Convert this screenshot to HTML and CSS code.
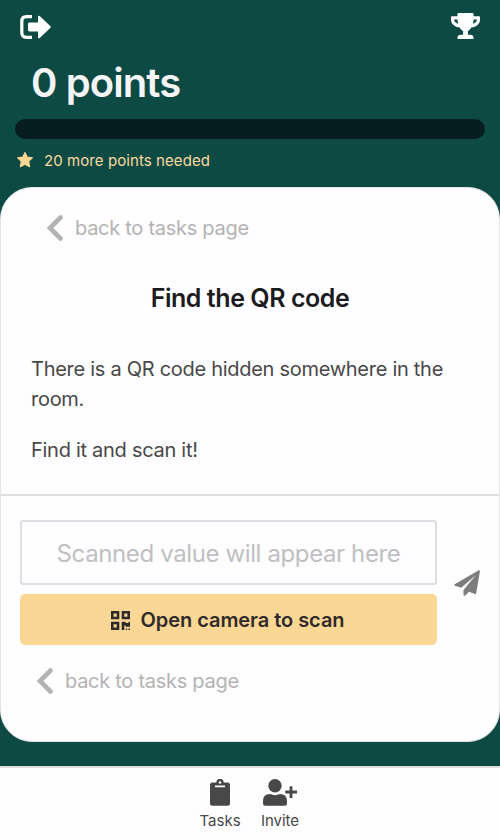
FILE: index.html
```
<!DOCTYPE html>
<html lang="en">
<head>
  <meta charset="UTF-8" />
  <meta name="viewport" content="width=device-width, initial-scale=1">
  <title>Find the QR code</title>
  <link rel="stylesheet" href="styles.css">
</head>
<body>
  <header class="header">
    <div class="top-bar">
      <svg class="logout" width="32" height="24" viewBox="0 0 32 24">
        <path d="M12 1.700H6.500Q1.800 1.700 1.800 6.500V17.500Q1.800 22.300 6.500 22.300H12" fill="none" stroke="#fff" stroke-width="3.200"/>
        <path d="M9.300 7.600H18V1.800Q18 .2 19.700 1L30.500 11.200Q31.200 12 30.500 12.800L19.700 23Q18 23.800 18 22.200V16.400H9.300Q8 16.400 8 15.100V8.900Q8 7.600 9.300 7.600Z" fill="#fff"/>
      </svg>
      <svg class="trophy" width="29" height="26" viewBox="0 0 576 512">
        <path fill="#fff" d="M552 64H448V24c0-13.300-10.700-24-24-24H152c-13.300 0-24 10.700-24 24v40H24C10.700 64 0 74.700 0 88v56c0 35.700 22.500 72.400 61.900 100.700 31.500 22.700 69.800 37.100 110 41.700C203.300 338.500 240 360 240 360v72h-48c-35.300 0-64 20.700-64 56v12c0 6.600 5.400 12 12 12h296c6.600 0 12-5.400 12-12v-12c0-35.300-28.700-56-64-56h-48v-72s36.700-21.500 68.100-73.600c40.300-4.600 78.600-19 110-41.700 39.300-28.300 61.900-65 61.900-100.700V88c0-13.300-10.700-24-24-24zM99.300 192.800C74.900 175.200 64 155.600 64 144v-16h64.200c1 32.600 5.800 61.200 12.800 86.200-15.100-5.200-29.200-12.400-41.700-21.400zM512 144c0 16.100-17.700 36.100-35.300 48.800-12.500 9-26.700 16.200-41.800 21.400 7-25 11.800-53.600 12.800-86.200H512v16z"/>
      </svg>
    </div>
    <h1 class="points">0 points</h1>
    <div class="progress"></div>
    <div class="needed">
      <svg width="18" height="18" viewBox="0 0 18 18">
        <path fill="#fbd995" stroke="#fbd995" stroke-width="1" stroke-linejoin="round" d="M9 1.300L11.300 6.100L16.600 6.800L12.800 10.500L13.700 15.900L9 13.400L4.300 15.900L5.200 10.500L1.400 6.800L6.700 6.100Z"/>
      </svg>
      <span>20 more points needed</span>
    </div>
  </header>

  <main class="card">
    <a class="back">
      <svg width="18" height="28" viewBox="0 0 18 28"><path d="M14.500 3.500L4 14L14.500 24.500" fill="none" stroke="#b3b3b3" stroke-width="4.600" stroke-linecap="round"/></svg>
      <span>back to tasks page</span>
    </a>
    <h2 class="title">Find the QR code</h2>
    <div class="text">
      <p>There is a QR code hidden somewhere in the room.</p>
      <p>Find it and scan it!</p>
    </div>
    <div class="answer">
      <div class="fields">
        <input class="scanned" type="text" placeholder="Scanned value will appear here" readonly>
        <button class="scan" type="button">
          <svg width="19" height="19" viewBox="0 0 19 19" fill="#302b2a">
            <path fill-rule="evenodd" d="M0 0H8.300V8.300H0ZM2.600 2.600V5.700H5.700V2.600ZM10.700 0H19V8.300H10.700ZM13.300 2.600V5.700H16.400V2.600ZM0 10.700H8.300V19H0ZM2.600 13.300V16.400H5.700V13.300Z"/>
            <path d="M10.700 10.700H14.700V12H17.500V10.700H19V15.800H14.700V14.400H13.300V19H10.700ZM14.800 17.500H16.200V19H14.800ZM17.500 17.500H19V19H17.500Z"/>
          </svg>
          <span>Open camera to scan</span>
        </button>
      </div>
      <svg class="send" width="26" height="26" viewBox="0 0 26 26">
        <path fill="#7d7d7d" d="M.7 14.300L24.300.4Q26 0 25.900 1.500L22.200 23.200Q21.900 24.500 20.600 24L15.100 21.800L11.300 25.500Q9.700 26.300 9.500 24.700V19.900L21.700 5.300L7.200 17.700L1 15.700Q-.2 15 .7 14.300Z"/>
      </svg>
    </div>
    <a class="back back-bottom">
      <svg width="18" height="28" viewBox="0 0 18 28"><path d="M14.500 3.500L4 14L14.500 24.500" fill="none" stroke="#b3b3b3" stroke-width="4.600" stroke-linecap="round"/></svg>
      <span>back to tasks page</span>
    </a>
  </main>

  <nav class="nav">
    <a class="nav-item">
      <svg width="20" height="27" viewBox="0 0 20 27">
        <path fill="#484848" fill-rule="evenodd" d="M2.500 3.500H6.300A3.700 3.700 0 0 1 13.700 3.500H17.500Q20 3.500 20 6V24.200Q20 26.700 17.500 26.700H2.500Q0 26.700 0 24.200V6Q0 3.500 2.500 3.500ZM10 2.200A1.300 1.300 0 1 0 10 4.800A1.300 1.300 0 1 0 10 2.200ZM5 6.600V8.300H15V6.600Z"/>
      </svg>
      <span>Tasks</span>
    </a>
    <a class="nav-item">
      <svg width="34" height="27" viewBox="0 0 34 27" fill="#484848">
        <circle cx="12" cy="6.700" r="6.700"/>
        <path d="M7 15Q12 17.300 17 15Q24 15 24 22V24.200Q24 26.700 21.500 26.700H2.500Q0 26.700 0 24.200V22Q0 15 7 15Z"/>
        <path d="M26.600 7.300H29.400V11.600H34V14.400H29.400V19H26.600V14.400H22.300V11.600H26.600Z"/>
      </svg>
      <span>Invite</span>
    </a>
  </nav>
</body>
</html>
```
FILE: styles.css
```
* {
  box-sizing: border-box;
}
body {
  margin: 0;
  height: 839px;
  display: flex;
  flex-direction: column;
  overflow: hidden;
  background: #0d4a44;
  font-family: Inter, sans-serif;
  color: #484848;
}
svg {
  display: block;
  flex: none;
}
h1, h2, p {
  margin: 0;
}
.header {
  height: 187px;
  padding: 13px 15px 0;
}
.top-bar {
  display: flex;
  justify-content: space-between;
  padding: 0 5px;
  height: 43px;
}
.logout {
  margin-top: 2px;
}
.points {
  padding-left: 16px;
  font-size: 40px;
  line-height: 54px;
  font-weight: 600;
  letter-spacing: -0.9px;
  color: #f5f5f8;
}
.progress {
  height: 20px;
  margin-top: 9px;
  border-radius: 10px;
  background: #061e20;
}
.needed {
  display: flex;
  align-items: center;
  gap: 10px;
  height: 20px;
  margin-top: 11px;
  font-size: 15px;
  padding-left: 1px;
  letter-spacing: 0.08px;
  color: #fbd9a0;
}
.card {
  height: 555px;
  flex: none;
  border: 1px solid #e4e4e7;
  border-radius: 32px;
  background: #fefdff;
}
.back {
  display: flex;
  align-items: center;
  gap: 11px;
  height: 28px;
  margin: 26px 0 0 45px;
  font-size: 20px;
  letter-spacing: -0.28px;
  color: #b3b3b3;
}
.title {
  margin-top: 40px;
  font-size: 25px;
  line-height: 32px;
  font-weight: 600;
  letter-spacing: -0.45px;
  text-align: center;
  color: #1c1b1e;
}
.text {
  height: 182px;
  padding: 40px 30px 0;
  font-size: 20px;
  line-height: 30px;
  letter-spacing: -0.28px;
  border-bottom: 2px solid #dfe1e1;
}
.text p + p {
  margin-top: 21px;
}
.answer {
  display: flex;
  align-items: center;
  gap: 17px;
  padding: 24px 19px 0;
}
.fields {
  width: 417px;
}
.scanned {
  display: block;
  width: 100%;
  height: 65px;
  padding: 2px 10px 0;
  border: 2px solid #dedee0;
  border-radius: 3px;
  background: #fefdff;
  font-family: inherit;
  font-size: 24px;
  letter-spacing: -0.38px;
  text-align: center;
}
.scanned::placeholder {
  color: #c0c0c1;
}
.scan {
  display: flex;
  align-items: center;
  justify-content: center;
  gap: 10px;
  width: 100%;
  height: 51px;
  margin-top: 9px;
  padding: 1px 1px 0 0;
  border: none;
  border-radius: 5px;
  background: #fad795;
  color: #302b2a;
  font-family: inherit;
  font-size: 20px;
  font-weight: 600;
  letter-spacing: -0.05px;
}
.back-bottom {
  margin: 22px 0 0 35px;
}
.nav {
  display: flex;
  flex: none;
  justify-content: center;
  gap: 20px;
  height: 73px;
  margin-top: 24px;
  padding-top: 11px;
  border-top: 2px solid #dcdfe0;
  background: #fefdff;
  font-size: 15px;
}
.nav-item {
  display: flex;
  flex-direction: column;
  align-items: center;
  gap: 5px;
  width: 40px;
}
```
